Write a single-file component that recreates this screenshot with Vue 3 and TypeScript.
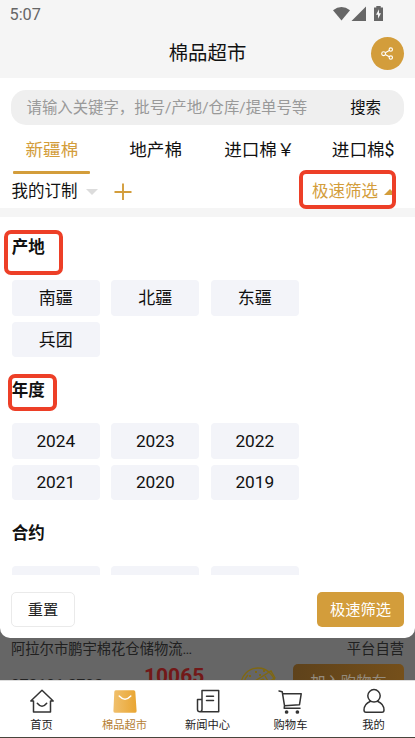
<script setup lang="ts">
interface FilterGroup {
  title: string
  options: string[]
}

const tabs: string[] = ['新疆棉', '地产棉', '进口棉￥', '进口棉$']
const groups: FilterGroup[] = [
  { title: '产地', options: ['南疆', '北疆', '东疆', '兵团'] },
  { title: '年度', options: ['2024', '2023', '2022', '2021', '2020', '2019'] },
  { title: '合约', options: ['', '', ''] },
]
const navItems: string[] = ['首页', '棉品超市', '新闻中心', '购物车', '我的']
</script>

<template>
  <div class="phone">
    <div class="status">
      <span class="time">5:07</span>
      <svg class="status-icons" width="52" height="16" viewBox="0 0 52 16">
        <path d="M1 4.200Q9.500-2.300 18 4.200L9.500 14.500Z" fill="#666" />
        <path d="M19.500 15L34 .6V15Z" fill="#666" />
        <path d="M42 1.600h2.300V0h4.400v1.600H51V15h-9Z" fill="#666" />
        <path d="M47 3.300l-3 5.400h2v4l3-5.400h-2Z" fill="#f5f5f5" />
      </svg>
    </div>
    <header class="titlebar">
      <h1>棉品超市</h1>
      <button class="share" aria-label="分享">
        <svg width="13" height="13" viewBox="0 0 13 13" fill="none" stroke="#fff" stroke-width="1.100">
          <circle cx="2.600" cy="6.700" r="1.900" />
          <circle cx="9.800" cy="2.600" r="1.700" />
          <circle cx="9.800" cy="10.600" r="1.700" />
          <path d="M4.300 5.800L8.300 3.500M4.300 7.600L8.300 9.800" />
        </svg>
      </button>
    </header>

    <div class="search">
      <span class="placeholder">请输入关键字，批号/产地/仓库/提单号等</span>
      <span class="go">搜索</span>
    </div>

    <nav class="tabs">
      <div v-for="(t, i) in tabs" :key="t" class="tab" :class="{ active: i === 0 }">{{ t }}</div>
    </nav>

    <div class="toolbar">
      <span>我的订制</span>
      <svg class="down" width="12" height="6" viewBox="0 0 12 6"><path d="M0 0H12L6 6Z" fill="#dcdcdc" /></svg>
      <svg class="plus" width="18" height="18" viewBox="0 0 18 18"><path d="M9 .5V17M.5 9H17.500" stroke="#d39d3b" stroke-width="1.900" /></svg>
      <span class="quick">极速筛选</span>
      <svg class="up" width="12" height="6" viewBox="0 0 12 6"><path d="M0 6H12L6 0Z" fill="#d39d3b" /></svg>
      <i class="mark mark-filter"></i>
    </div>
    <div class="band"></div>

    <main class="backdrop">
      <section class="sheet">
        <div class="groups">
          <div v-for="(g, gi) in groups" :key="g.title" class="group">
            <h2>{{ g.title }}<i v-if="gi < 2" class="mark" :class="'mark-' + gi"></i></h2>
            <div class="options">
              <div v-for="(o, i) in g.options" :key="i" class="option" :class="{ year: gi === 1 }">{{ o }}</div>
            </div>
          </div>
        </div>
        <div class="actions">
          <button class="reset">重置</button>
          <button class="apply">极速筛选</button>
        </div>
      </section>
      <div class="listing">
        <div class="seller"><span>阿拉尔市鹏宇棉花仓储物流…</span><span>平台自营</span></div>
        <div class="product">
          <span class="batch">072101 2702</span>
          <span class="price">10065</span>
          <svg class="coin" width="36" height="36" viewBox="0 0 36 36" fill="none" stroke="#806810" stroke-width="1.300">
            <circle cx="18" cy="18" r="17" />
            <path d="M4 18A14 14 0 0 1 8 8M10 17L31 4L35 11L20 20M14 17l9-5 3 4M25 9l3 5" />
            <path d="M9 9h2M15 5h2M9 14h2M19 8h2M23 4h2" stroke-width="2" />
          </svg>
          <span class="cart">加入购物车</span>
        </div>
      </div>
    </main>

    <footer class="nav">
      <div v-for="(n, i) in navItems" :key="n" class="nav-item" :class="{ current: i === 1 }">
        <svg width="26" height="26" viewBox="0 0 26 26" fill="none" stroke="#333" stroke-width="1.500" stroke-linejoin="round" stroke-linecap="round">
          <g v-if="i === 0">
            <path d="M4.500 13H1.800L13 2.300L24.200 13H21.500V24H4.500Z" />
            <path d="M8.300 15.300Q13 21.300 17.700 15.300" />
          </g>
          <g v-else-if="i === 1" stroke="none">
            <defs>
              <linearGradient id="bag" x1="0" x2="1" y1="0" y2="0">
                <stop offset="0" stop-color="#f0c06d" /><stop offset="1" stop-color="#e9a531" />
              </linearGradient>
            </defs>
            <path d="M3.800 2.300H21.700Q23.200 2.300 23.300 3.800L24.600 23Q24.700 24.700 23.100 24.700H2.900Q1.300 24.700 1.400 23L2.300 3.800Q2.400 2.300 3.800 2.300Z" fill="url(#bag)" />
            <path d="M7.200 8Q13 14.300 18.800 8" stroke="#fff" />
          </g>
          <g v-else-if="i === 2">
            <path d="M7 2.500H23.700V23.800H5Q2.500 23.800 2.500 21.500V11.500H7V21.300Q7 23.800 5 23.800M7 11.500V2.500" />
            <path d="M11.500 8.200H18.500M11.500 12.500H18.500" />
          </g>
          <g v-else-if="i === 3">
            <path d="M1 3L4.200 3.700L6.500 17.700L21.500 16.700L23.200 5.800H4.600M6.500 17.700L6.200 20.300H22" />
            <circle cx="8.600" cy="24" r="1.100" fill="#333" />
            <circle cx="19.400" cy="24" r="1.100" fill="#333" />
          </g>
          <g v-else>
            <circle cx="13" cy="7.800" r="6.200" />
            <path d="M9.500 13.200Q3 16 3 22Q3 24.300 5 24.300H21Q23 24.300 23 22Q23 16 16.500 13.200" />
          </g>
        </svg>
        <span>{{ n }}</span>
      </div>
    </footer>
  </div>
</template>

<style>
body { margin: 0; overflow: hidden; }
</style>

<style scoped>
* { box-sizing: border-box; }
.phone { width: 415px; height: 738px; display: flex; flex-direction: column; overflow: hidden; background: #fff; color: #111; font-family: Roboto, "Noto Sans CJK SC", sans-serif; font-weight: 400; white-space: nowrap; }
button { font: inherit; border: 0; padding: 0; }
.status { height: 28px; flex: none; padding: 0 31px 0 9.500px; display: flex; justify-content: space-between; align-items: center; background: #f5f5f5; }
.time { font-size: 16.300px; color: #666; }
.status-icons { margin-bottom: 1px; }
.titlebar { height: 50px; flex: none; display: grid; grid-template-columns: 1fr auto 1fr; align-items: center; padding: 0 11px; background: #f5f5f5; }
.titlebar h1 { grid-column: 2; margin: 0; padding-top: 1px; font-size: 19.400px; font-weight: 400; line-height: 28px; }
.share { justify-self: end; width: 33px; height: 33px; border-radius: 50%; background: #d39d3b; display: flex; align-items: center; justify-content: center; }
.search { flex: none; height: 35px; margin: 12px 11px 0; padding: 0 23px 3px 15.500px; border-radius: 15px; background: #efefef; display: flex; justify-content: space-between; align-items: center; font-size: 15.400px; }
.placeholder { color: #999; }
.tabs { flex: none; height: 49px; display: grid; grid-template-columns: repeat(4, 1fr); }
.tab { display: flex; flex-direction: column; align-items: center; font-size: 17.600px; line-height: 48px; height: 49px; padding-top: 1px; }
.active { color: #d39d3b; }
.active::after { content: ""; flex: none; width: 77px; height: 3px; margin-top: -3px; border-radius: 1px; background: #d39d3b; }
.toolbar { position: relative; flex: none; height: 34px; padding: 2px 19px 0 11.500px; display: flex; align-items: center; font-size: 16.500px; line-height: 24px; }
.down { margin-left: 8px; }
.plus { margin-left: 16.500px; }
.quick { margin-left: auto; color: #d39d3b; }
.up { margin-left: 6px; }
.mark { position: absolute; border: 4px solid #ed3f27; border-radius: 7px; pointer-events: none; }
.mark-filter { left: 299px; top: -4px; width: 97px; height: 39px; }
.band { flex: none; height: 9px; background: #f5f5f5; }
.backdrop { flex: 1; min-height: 0; overflow: hidden; background: #666; }
.sheet { height: 421px; background: #fff; border-radius: 0 0 10px 10px; }
.groups { height: 358px; overflow: hidden; padding: 19px 0 0 11.700px; }
.group { height: 143px; }
.group h2 { position: relative; margin: 0 0 20px; font-size: 16.500px; line-height: 24px; font-weight: 700; }
.mark-0 { left: -7.700px; top: -6px; width: 59px; height: 45px; }
.mark-1 { left: -3.700px; top: -5px; width: 49px; height: 37px; }
.options { display: grid; grid-template-columns: repeat(3, 88.300px); gap: 6px 11.200px; }
.option { height: 35.600px; padding-bottom: 2px; border-radius: 4px; background: #f3f4f9; display: flex; align-items: center; justify-content: center; font-size: 17px; }
.year { padding-bottom: 0; font-size: 17.300px; }
.actions { padding: 17px 11px 0; display: flex; justify-content: space-between; font-size: 15.300px; }
.actions button { height: 35px; padding-bottom: 3px; border-radius: 5px; }
.actions .reset { width: 64px; border: 1px solid #eaeaea; background: #fff; color: #222; }
.actions .apply { width: 87px; background: #d39d3b; color: #fff; }
.listing { padding: 0 11px; }
.seller { display: flex; justify-content: space-between; font-size: 14.300px; line-height: 22px; color: #202020; }
.product { display: flex; align-items: flex-start; height: 60px; margin-top: 4px; }
.batch { width: 133px; padding-top: 12px; font-size: 15.500px; line-height: 18px; font-weight: 500; color: #222; }
.price { width: 96px; font-size: 21px; line-height: 24px; font-weight: 700; color: #721818; }
.coin { margin-top: 3px; }
.cart { margin-left: auto; width: 111px; height: 36px; border-radius: 5px; background: linear-gradient(100deg, #5e421b, #76501a); color: #948b7d; font-size: 15.300px; line-height: 36px; text-align: center; }
.nav { flex: none; height: 58px; display: grid; grid-template-columns: repeat(5, 1fr); border-top: 1px solid #ddd; border-bottom: 1px solid #49443c; background: #fff; padding-top: 7px; }
.nav-item { display: flex; flex-direction: column; align-items: center; font-size: 11.300px; line-height: 16px; color: #222; }
.nav-item span { margin-top: 4px; }
.current { color: #b58034; }
</style>
